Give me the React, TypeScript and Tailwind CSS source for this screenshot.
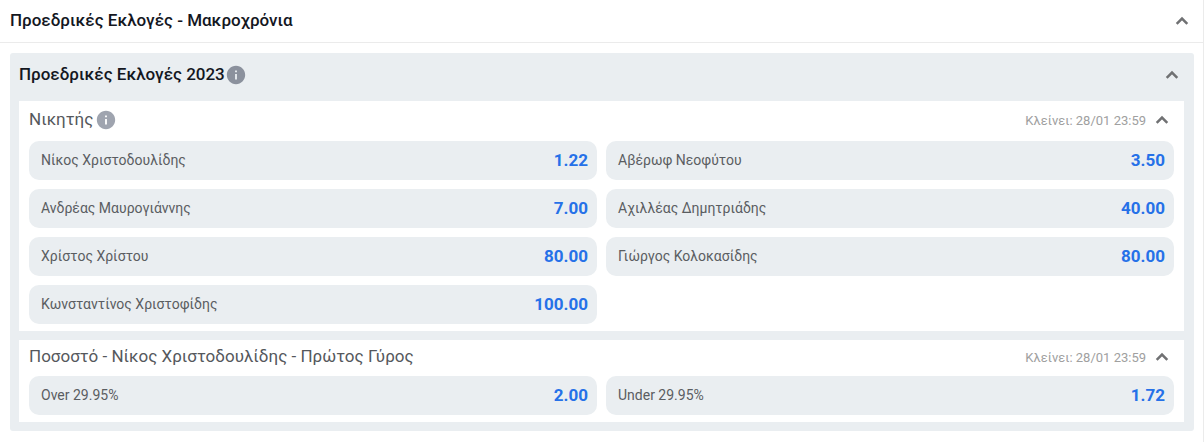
import { useState } from "react";
import { MdInfo } from "react-icons/md";

type Selection = { name: string; odds: string };

type Market = {
  title: string;
  closes: string;
  info?: boolean;
  selections: Selection[];
};

const markets: Market[] = [
  {
    title: "Νικητής",
    closes: "28/01 23:59",
    info: true,
    selections: [
      { name: "Νίκος Χριστοδουλίδης", odds: "1.22" },
      { name: "Αβέρωφ Νεοφύτου", odds: "3.50" },
      { name: "Ανδρέας Μαυρογιάννης", odds: "7.00" },
      { name: "Αχιλλέας Δημητριάδης", odds: "40.00" },
      { name: "Χρίστος Χρίστου", odds: "80.00" },
      { name: "Γιώργος Κολοκασίδης", odds: "80.00" },
      { name: "Κωνσταντίνος Χριστοφίδης", odds: "100.00" },
    ],
  },
  {
    title: "Ποσοστό - Νίκος Χριστοδουλίδης - Πρώτος Γύρος",
    closes: "28/01 23:59",
    selections: [
      { name: "Over 29.95%", odds: "2.00" },
      { name: "Under 29.95%", odds: "1.72" },
    ],
  },
];

function Toggle({ open, onClick, label }: { open: boolean; onClick: () => void; label: string }) {
  return (
    <button type="button" aria-label={label} aria-expanded={open} onClick={onClick}>
      <svg
        viewBox="0 0 24 24"
        fill="none"
        stroke="currentColor"
        strokeWidth="2.5"
        className={open ? "size-6 text-[#707173]" : "size-6 rotate-180 text-[#707173]"}
      >
        <path d="M6.7 14.8 12 9.5l5.3 5.3" />
      </svg>
    </button>
  );
}

function MarketPanel({ market }: { market: Market }) {
  const [open, setOpen] = useState(true);

  return (
    <section className="bg-white px-2.5 pb-[7px]">
      <div
        className={
          market.info ? "flex h-10 items-center justify-between pb-0.5" : "flex h-9 items-center justify-between pb-0.5"
        }
      >
        <div className="flex items-center gap-0.5">
          <h3 className="pb-0.5 text-[17px] leading-5 text-[#55585c]">{market.title}</h3>
          {market.info && (
            <button type="button" aria-label="Πληροφορίες">
              <MdInfo className="size-[22px] text-[#9fa4af]" />
            </button>
          )}
        </div>
        <div className="flex items-center gap-1">
          <span className="pt-0.5 text-[13px] leading-5 text-[#a0a0a0]">Κλείνει: {market.closes}</span>
          <Toggle open={open} onClick={() => setOpen(!open)} label={market.title} />
        </div>
      </div>
      {open && (
        <div className="grid grid-cols-2 gap-[9px]">
          {market.selections.map((s) => (
            <button
              key={s.name}
              type="button"
              className="flex h-[39px] items-center justify-between rounded-[10px] bg-[#eaeef1] pr-[9px] pl-3 hover:bg-[#dfe5ea]"
            >
              <span className="pb-px text-sm text-[#5a5d61]">{s.name}</span>
              <span className="pb-0.5 text-[17px] leading-6 font-bold text-[#2671e8]">{s.odds}</span>
            </button>
          ))}
        </div>
      )}
    </section>
  );
}

export default function App() {
  const [open, setOpen] = useState(true);
  const [groupOpen, setGroupOpen] = useState(true);

  return (
    <main className="min-h-screen border-r border-[#ebebeb] bg-white font-['Roboto','Noto_Sans',sans-serif]">
      <header className="flex h-[43px] items-center justify-between border-b border-[#ebebeb] pr-[9px] pl-2.5">
        <h1 className="text-[17px] font-medium text-[#14171f]">Προεδρικές Εκλογές - Μακροχρόνια</h1>
        <Toggle open={open} onClick={() => setOpen(!open)} label="Προεδρικές Εκλογές - Μακροχρόνια" />
      </header>

      {open && (
        <div className="pt-2.5 pr-[9px] pl-2.5">
          <div className="rounded-[3px] bg-[#eaeef1] pr-2.5 pb-[9px] pl-[9px]">
            <div className="flex h-12 items-center justify-between pb-[5px]">
              <div className="flex items-center">
                <h2 className="text-[17px] font-medium text-[#14171f]">Προεδρικές Εκλογές 2023</h2>
                <button type="button" aria-label="Πληροφορίες">
                  <MdInfo className="size-[22px] text-[#8b919d]" />
                </button>
              </div>
              <Toggle open={groupOpen} onClick={() => setGroupOpen(!groupOpen)} label="Προεδρικές Εκλογές 2023" />
            </div>
            {groupOpen && (
              <div className="flex flex-col gap-[9px]">
                {markets.map((market) => (
                  <MarketPanel key={market.title} market={market} />
                ))}
              </div>
            )}
          </div>
        </div>
      )}
    </main>
  );
}
